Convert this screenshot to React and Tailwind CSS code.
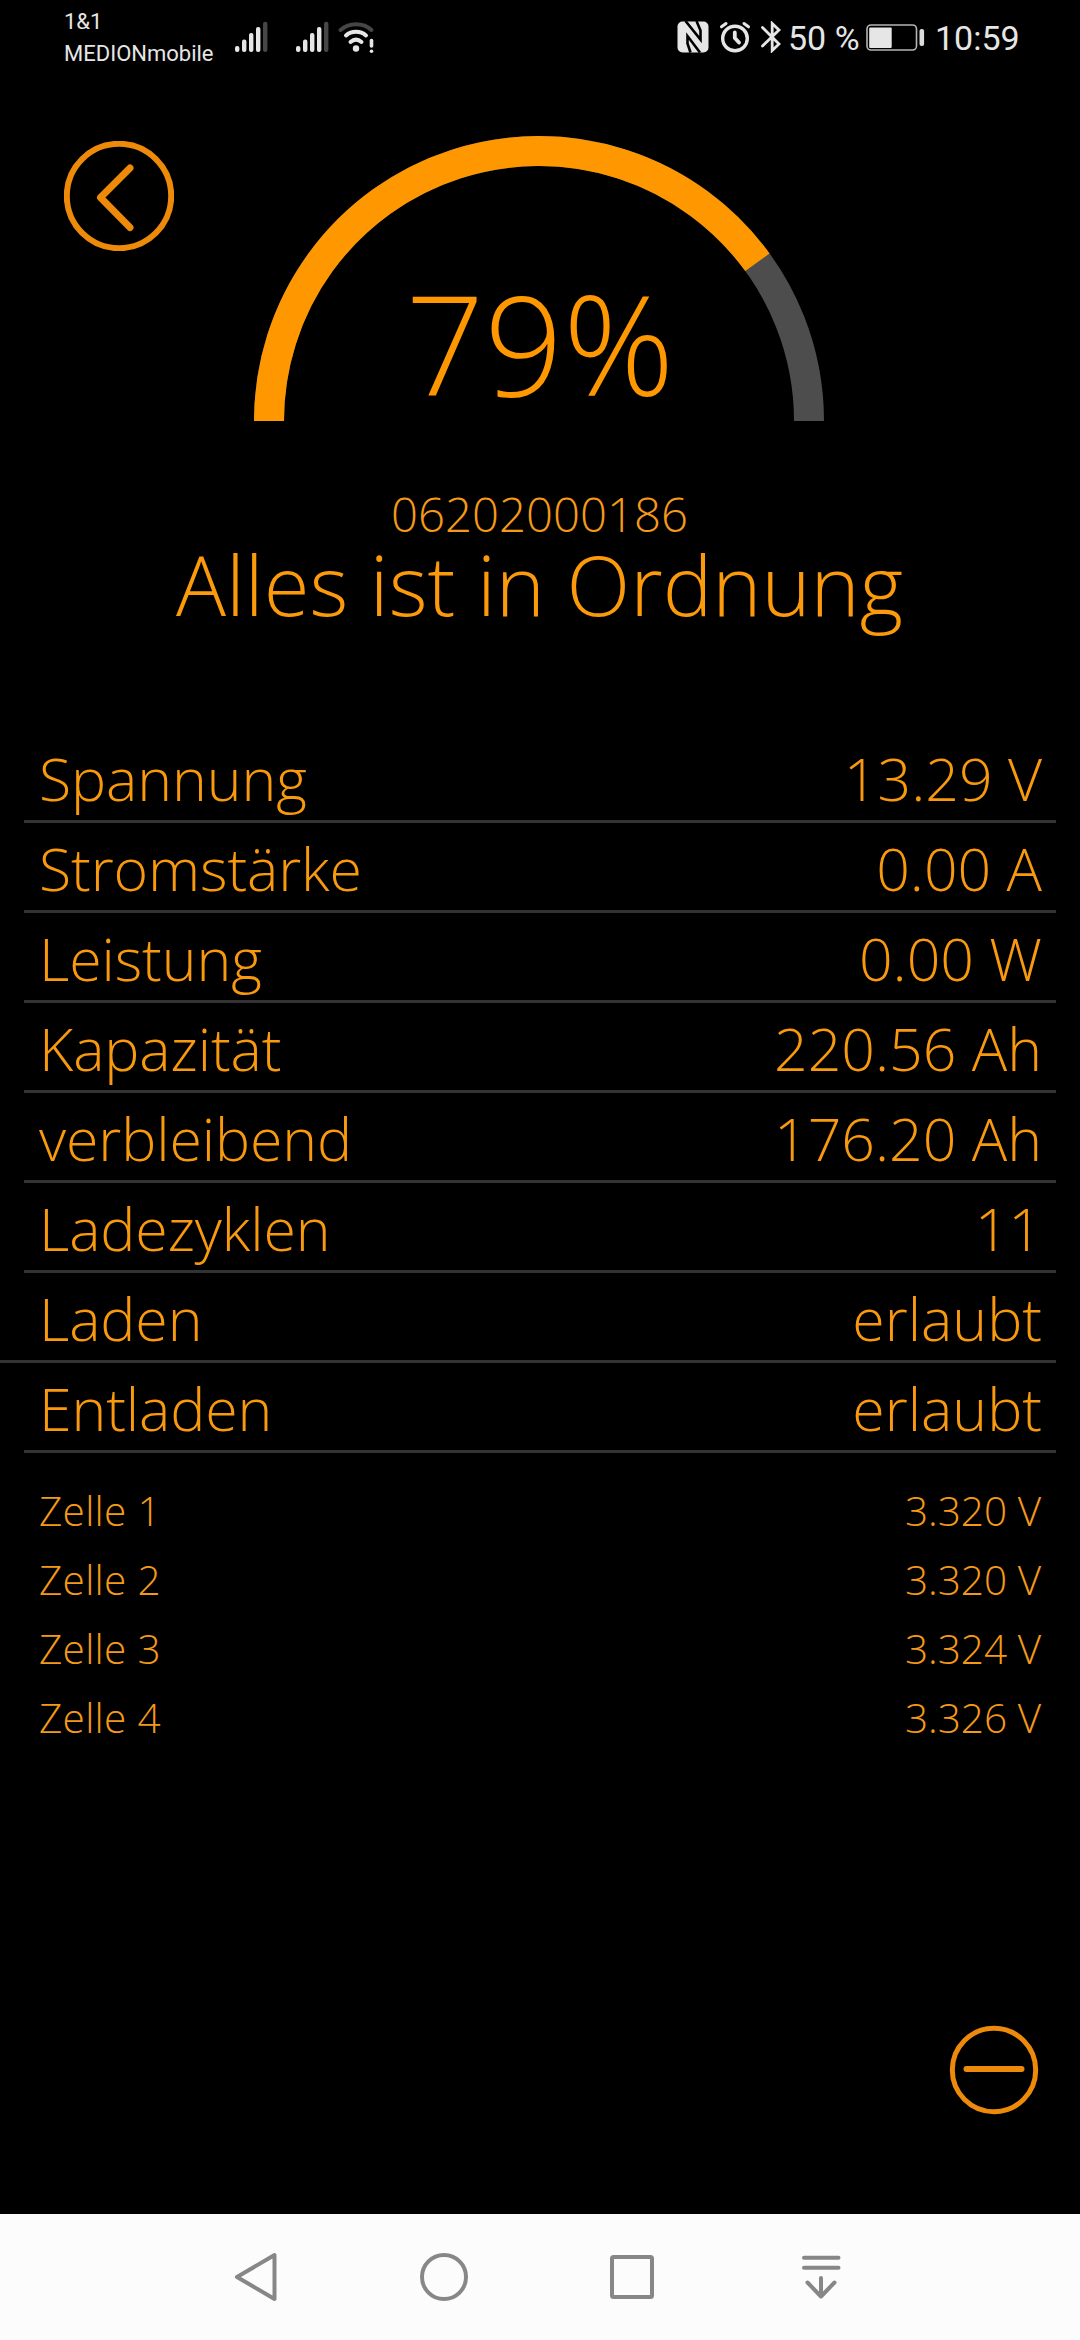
/* eslint-disable react/prop-types */

const values = [
  { label: "Spannung", value: "13.29 V" },
  { label: "Stromstärke", value: "0.00 A" },
  { label: "Leistung", value: "0.00 W" },
  { label: "Kapazität", value: "220.56 Ah" },
  { label: "verbleibend", value: "176.20 Ah" },
  { label: "Ladezyklen", value: "11" },
  { label: "Laden", value: "erlaubt", fullLine: true },
  { label: "Entladen", value: "erlaubt" },
];

const cells = [
  { label: "Zelle 1", value: "3.320 V" },
  { label: "Zelle 2", value: "3.320 V" },
  { label: "Zelle 3", value: "3.324 V" },
  { label: "Zelle 4", value: "3.326 V" },
];

function Signal({ className }) {
  return (
    <svg className={className} width="33" height="32" viewBox="0 0 33 32">
      <g fill="#e6e6e6">
        <rect x="0" y="25" width="4.4" height="6" rx="2" />
        <rect x="7" y="18.5" width="4.4" height="12.5" rx="2" />
        <rect x="14" y="12" width="4.4" height="19" rx="2" />
        <rect x="21" y="6" width="4.4" height="25" rx="2" />
      </g>
      <rect x="28" y="0.7" width="4.4" height="30.3" rx="2" fill="#464646" />
    </svg>
  );
}

function Wifi() {
  return (
    <svg className="ml-[8px]" width="38" height="32" viewBox="0 0 38 32" fill="none" strokeLinecap="round" strokeWidth="4">
      <path d="M3.5 9C12.5 1.2 26 1.2 34.5 9" stroke="#464646" />
      <path d="M9 14.5C14.5 9.600 23.5 9.600 29 14.5" stroke="#e6e6e6" />
      <path d="M13.5 21C17 18 21 18 24.5 21" stroke="#e6e6e6" />
      <circle cx="19" cy="27.5" r="3.2" fill="#e6e6e6" />
      <path d="M34.5 19.5V25" stroke="#e6e6e6" strokeWidth="3.6" />
      <circle cx="34.5" cy="30.2" r="1.8" fill="#e6e6e6" />
    </svg>
  );
}

function StatusBar() {
  return (
    <div className="flex h-20 items-start pl-16 font-['Roboto',sans-serif] font-normal text-[#e6e6e6]">
      <div className="w-[171px] pt-[6px] text-[22px] leading-8 whitespace-nowrap">
        <div>1&amp;1</div>
        <div>MEDIONmobile</div>
      </div>
      <Signal className="mt-[21px]" />
      <Signal className="mt-[21px] ml-[28px]" />
      <div className="mt-[21px]">
        <Wifi />
      </div>

      {/* NFC */}
      <svg className="mt-[21px] ml-[302px]" width="32" height="32" viewBox="0 0 32 32">
        <rect x="0.5" y="0.5" width="31" height="31" rx="5" fill="#e6e6e6" />
        <path d="M8.5 0L23.5 18.5V9.5L19.5 0M23 31.5L10.5 15V22.5L13.5 31.5" fill="none" stroke="#000" strokeWidth="2.6" />
      </svg>

      {/* alarm */}
      <svg className="mt-[21px] ml-[10px]" width="32" height="32" viewBox="0 0 32 32" fill="none" stroke="#e6e6e6" strokeLinecap="round" strokeLinejoin="round">
        <circle cx="16" cy="17.5" r="12.3" strokeWidth="3.4" />
        <path d="M15.8 11.500V17L20 21.5" strokeWidth="3.8" />
        <path d="M2.5 5.800L7 2.5M25 2.5L29.5 5.8" strokeWidth="3" />
      </svg>

      {/* bluetooth */}
      <svg className="mt-[21px] ml-[9px]" width="22" height="32" viewBox="0 0 22 32" fill="none" stroke="#e6e6e6" strokeWidth="2.8" strokeLinecap="round">
        <path d="M2.5 6.500L19 23L12.2 29.500V2.500L19 9L2.5 25" />
      </svg>

      <div className="ml-[6px] w-[78px] pt-[18px] text-[34px] leading-10 whitespace-nowrap">50 %</div>

      {/* battery */}
      <svg className="mt-[23px]" width="60" height="30" viewBox="0 0 60 30">
        <rect x="1" y="2" width="49.5" height="25" rx="4" fill="none" stroke="#b5b5b5" strokeWidth="1.6" />
        <rect x="3.2" y="4.5" width="22.5" height="20.5" rx="1" fill="#e6e6e6" />
        <rect x="53.5" y="6" width="4.6" height="17" rx="2" fill="#dcdcdc" />
      </svg>

      <div className="ml-[9px] pt-[18px] text-[34px] leading-10">10:59</div>
    </div>
  );
}

function Gauge({ label }) {
  return (
    <div className="relative">
      <svg width="570" height="285" viewBox="0 0 570 285" fill="none" strokeWidth="30">
        <path d="M15 285A270 270 0 0 1 555 285" stroke="#4d4d4d" />
        <path d="M15 285A270 270 0 0 1 503.43 126.3" stroke="#ff9800" />
      </svg>
      <div className="absolute top-[136px] left-px w-full text-center text-[138px] leading-[140px]">{label}</div>
    </div>
  );
}

function ValueRow({ label, value, fullLine }) {
  return (
    <div
      className={`mr-6 flex h-[90px] justify-between border-b-3 border-[#333333] pt-[2px] pr-[14px] text-[59px] leading-[86px] text-[#f99a0e] ${
        fullLine ? "pl-[39px]" : "ml-6 pl-[15px]"
      }`}
    >
      <span className="tracking-[-0.1px]">{label}</span>
      <span>{value}</span>
    </div>
  );
}

function NavBar() {
  return (
    <div className="flex h-[126px] items-center gap-[140px] bg-[#fcfcfc] pl-[232px]">
      <svg width="48" height="50" viewBox="0 0 48 50" fill="none" stroke="#878787" strokeWidth="4" strokeLinejoin="round">
        <path d="M5 25L42.5 3V47Z" />
      </svg>
      <svg width="48" height="50" viewBox="0 0 48 50" fill="none" stroke="#878787" strokeWidth="4">
        <circle cx="24" cy="25" r="22" />
      </svg>
      <svg width="48" height="50" viewBox="0 0 48 50" fill="none" stroke="#878787" strokeWidth="4">
        <rect x="4" y="5" width="40" height="40" rx="1.5" />
      </svg>
      <svg width="48" height="50" viewBox="0 0 48 50" fill="none" stroke="#878787" strokeWidth="4" strokeLinecap="round" strokeLinejoin="round">
        <path d="M8 5.800H42.500M8 15.800H42.500M25 26V44M11.5 30.500L25 44.500L38.5 30.5" />
      </svg>
    </div>
  );
}

export default function App() {
  return (
    <div className="flex h-[2340px] w-[1080px] flex-col overflow-hidden bg-black font-['Open_Sans',sans-serif] font-light text-[#ff9800]">
      <StatusBar />

      <div className="flex h-[405px] gap-[80px] pt-14 pl-16">
        <svg className="mt-[5px]" width="110" height="110" viewBox="0 0 110 110" fill="none" stroke="#ed8a0a">
          <circle cx="55" cy="55" r="52.2" strokeWidth="6" />
          <path d="M66 27L36.5 56.500L66 86.5" strokeWidth="7" strokeLinecap="round" strokeLinejoin="round" />
        </svg>
        <Gauge label="79%" />
      </div>

      <div className="pr-px text-center">
        <div className="text-[47.3px] leading-[58px] text-[#f49a18]">06202000186</div>
        <div className="text-[83.3px] leading-[82px] text-[#fb9a0a]">Alles ist in Ordnung</div>
      </div>

      <div className="mt-[108px]">
        {values.map((item) => (
          <ValueRow key={item.label} {...item} />
        ))}
      </div>

      <div className="mt-[23px] px-[39px] text-[40.5px] leading-[69px] text-[#f49a18]">
        {cells.map(({ label, value }) => (
          <div key={label} className="flex justify-between">
            <span className="tracking-[0.3px]">{label}</span>
            <span>{value}</span>
          </div>
        ))}
      </div>

      <div className="mt-auto flex justify-end pr-[41px] pb-[99px]">
        <svg width="90" height="90" viewBox="0 0 90 90" fill="none" stroke="#ed8a0a">
          <circle cx="45" cy="45" r="41.7" strokeWidth="5" />
          <path d="M17.5 44H72.5" strokeWidth="6" strokeLinecap="round" />
        </svg>
      </div>

      <NavBar />
    </div>
  );
}
